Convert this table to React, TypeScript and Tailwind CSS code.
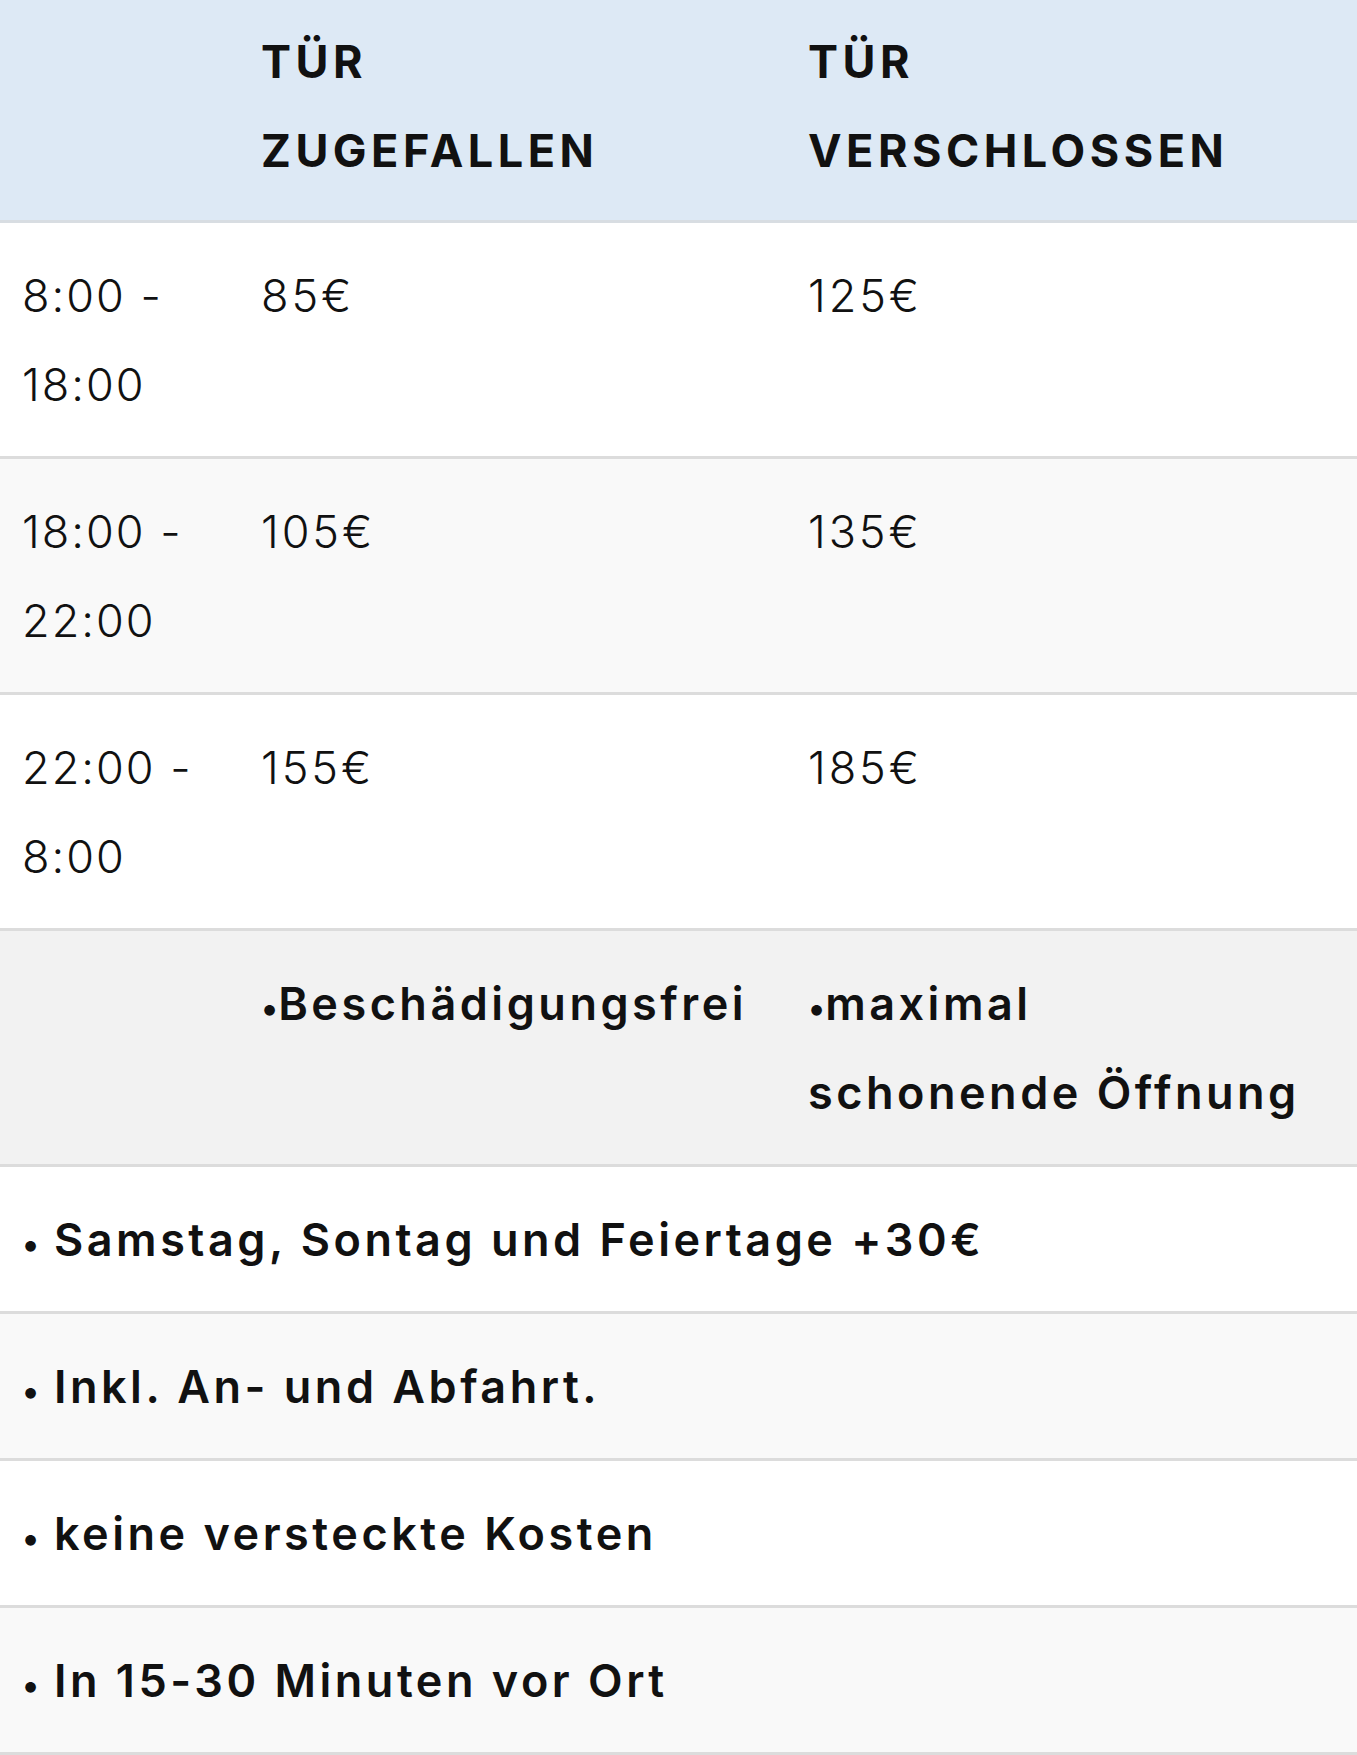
const prices = [
  { time: "8:00 - 18:00", a: "85€", b: "125€", bg: "bg-white" },
  { time: "18:00 - 22:00", a: "105€", b: "135€", bg: "bg-[#f9f9f9]" },
  { time: "22:00 - 8:00", a: "155€", b: "185€", bg: "bg-white" },
]

const notes = [
  "Samstag, Sontag und Feiertage +30€",
  "Inkl. An- und Abfahrt.",
  "keine versteckte Kosten",
  "In 15-30 Minuten vor Ort",
]

const cell = "pl-[22px] pr-[22px] pt-[28px] pb-[27px] align-top"

function Dot() {
  return <span className="text-[34px] leading-none tracking-normal">•</span>
}

export default function App() {
  return (
    <div className="w-[1357px] bg-white text-[#111] font-['Inter','Liberation_Sans',sans-serif] text-[45px] leading-[89px]">
      <table className="w-full table-fixed border-collapse">
        <colgroup>
          <col className="w-[239px]" />
          <col className="w-[547px]" />
          <col />
        </colgroup>
        <thead>
          <tr className="bg-[#dde9f5] border-b-[3px] border-[#d8dde2]">
            <th className="pl-[22px] pr-[22px] pt-[17px] pb-[25px]"></th>
            <th className="pl-[22px] pr-[22px] pt-[17px] pb-[25px] text-left align-top font-bold uppercase tracking-[0.1em]">
              Tür
              <br />
              Zugefallen
            </th>
            <th className="pl-[22px] pr-[22px] pt-[17px] pb-[25px] text-left align-top font-bold uppercase tracking-[0.1em]">
              Tür
              <br />
              Verschlossen
            </th>
          </tr>
        </thead>
        <tbody>
          {prices.map((row) => (
            <tr key={row.time} className={`${row.bg} border-b-[3px] border-[#dcdcdc]`}>
              <td className={`${cell} font-light tracking-[0.045em]`}>{row.time}</td>
              <td className={`${cell} font-light tracking-[0.065em]`}>{row.a}</td>
              <td className={`${cell} font-light tracking-[0.065em]`}>{row.b}</td>
            </tr>
          ))}
          <tr className="bg-[#f2f2f2] border-b-[3px] border-[#dcdcdc]">
            <td className={cell}></td>
            <td className={`${cell} pr-[4px] font-semibold tracking-[0.078em]`}>
              <Dot />Beschädigungsfrei
            </td>
            <td className={`${cell} font-semibold tracking-[0.078em]`}>
              <Dot />maximal
              <br />
              schonende Öffnung
            </td>
          </tr>
          {notes.map((note, i) => (
            <tr key={note} className={`${i % 2 === 0 ? "bg-white" : "bg-[#f9f9f9]"} border-b-[3px] border-[#dcdcdc]`}>
              <td colSpan={3} className="pl-[22px] pr-[22px] pt-[28px] pb-[27px] font-semibold tracking-[0.078em]">
                <Dot /> {note}
              </td>
            </tr>
          ))}
        </tbody>
      </table>
    </div>
  )
}
